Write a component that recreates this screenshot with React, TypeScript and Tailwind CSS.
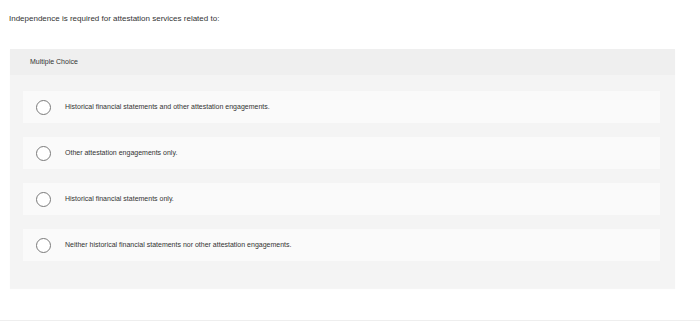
const options = [
  "Historical financial statements and other attestation engagements.",
  "Other attestation engagements only.",
  "Historical financial statements only.",
  "Neither historical financial statements nor other attestation engagements.",
];

export default function App() {
  return (
    <div className="w-[700px] h-[327px] bg-white font-['Liberation_Sans',Arial,sans-serif] text-[#333] overflow-hidden flex flex-col">
      <p className="pl-[9px] pt-[14px] text-[8px] leading-[10px]">
        Independence is required for attestation services related to:
      </p>

      <div className="ml-[10px] mt-[25px] w-[665px] bg-[#f4f4f4] shadow-[0_1px_1px_rgba(0,0,0,0.04)]">
        <div className="h-[26px] bg-[#efefef] pl-[20px] flex items-center text-[7px]">
          Multiple Choice
        </div>
        <div className="flex flex-col gap-[14px] pl-[13px] pr-[15px] pt-[16px] pb-[27px]">
          {options.map((opt) => (
            <div
              key={opt}
              className="h-[32px] bg-[#fafafa] flex items-center pl-[13px]"
            >
              <span className="w-[15px] h-[15px] rounded-full border border-[#7a7a7a] bg-white shrink-0" />
              <span className="ml-[14px] text-[7px]">{opt}</span>
            </div>
          ))}
        </div>
      </div>

      <div className="mt-auto mb-[6px] h-px bg-[#eeeeee]" />
    </div>
  );
}
